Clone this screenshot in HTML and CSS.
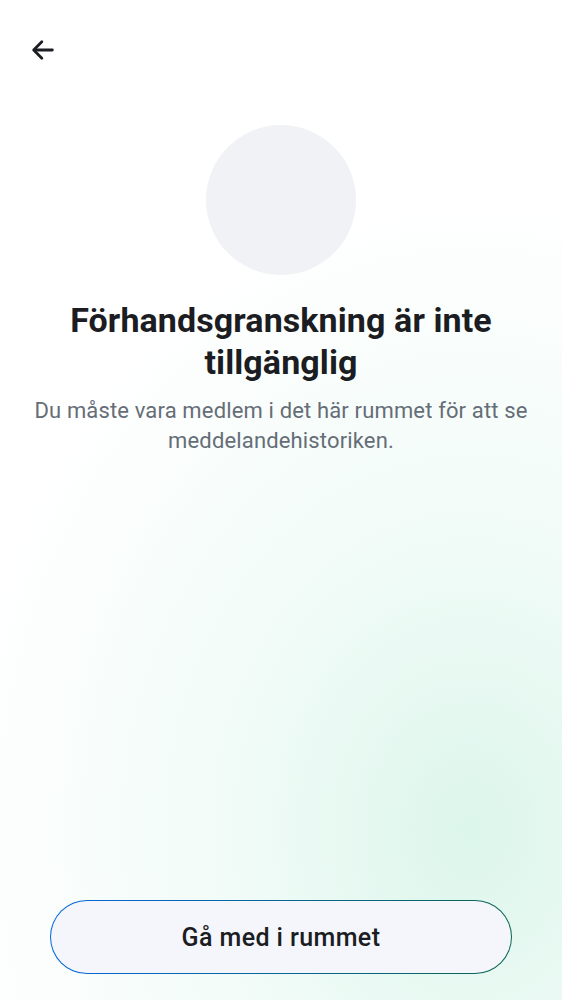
FILE: index.html
```html
<!DOCTYPE html>
<html lang="sv">
<head>
<meta charset="utf-8">
<link rel="stylesheet" href="styles.css">
</head>
<body>
<div class="screen">
  <header class="topbar">
    <button class="back" aria-label="Tillbaka">
      <svg width="28" height="28" viewBox="0 0 24 24" fill="none" stroke="#1b1d22" stroke-width="2.4" stroke-linecap="round" stroke-linejoin="round"><path d="M20 12H5"/><path d="M11 5l-7 7 7 7"/></svg>
    </button>
  </header>
  <main class="content">
    <div class="avatar"></div>
    <h1 class="title">Förhandsgranskning är inte tillgänglig</h1>
    <p class="subtitle">Du måste vara medlem i det här rummet för att se meddelandehistoriken.</p>
  </main>
  <footer class="actions">
    <button class="join">Gå med i rummet</button>
  </footer>
</div>
</body>
</html>
```
FILE: styles.css
```css
html, body {
  margin: 0;
  padding: 0;
  height: 100%;
}
body {
  font-family: Roboto, "Noto Sans", sans-serif;
  background: #ffffff;
}
.screen {
  height: 1000px;
  display: flex;
  flex-direction: column;
  background:
    radial-gradient(ellipse 520px 640px at 470px 830px, rgba(214, 244, 232, 0.85) 0%, rgba(226, 247, 239, 0.5) 45%, rgba(255, 255, 255, 0) 100%),
    #ffffff;
  box-sizing: border-box;
}
.topbar {
  display: flex;
  padding: 36px 0 0 29px;
}
.back {
  border: 0;
  background: none;
  padding: 0;
  width: 28px;
  height: 28px;
  display: flex;
  cursor: pointer;
}
.content {
  flex: 1;
  display: flex;
  flex-direction: column;
  align-items: center;
  padding: 61px 12px 0;
  text-align: center;
}
.avatar {
  width: 150px;
  height: 150px;
  border-radius: 50%;
  background: #f0f2f5;
}
.title {
  margin: 24px 0 0;
  font-size: 34px;
  line-height: 42px;
  font-weight: 700;
  color: #1b1d22;
  letter-spacing: 0.1px;
  max-width: 480px;
}
.subtitle {
  margin: 13px 0 0;
  font-size: 22px;
  line-height: 30px;
  color: #656d77;
  letter-spacing: 0.15px;
  max-width: 538px;
}
.actions {
  display: flex;
  justify-content: center;
  padding-bottom: 26px;
}
.join {
  width: 462px;
  height: 74px;
  border-radius: 37px;
  border: 1.5px solid transparent;
  background:
    linear-gradient(#f4f6fb, #f4f6fb) padding-box,
    linear-gradient(90deg, #0467dd, #0a6650) border-box;
  font-family: Roboto, "Noto Sans", sans-serif;
  font-size: 25px;
  font-weight: 500;
  color: #1b1d22;
  letter-spacing: 0.4px;
  cursor: pointer;
}
```
